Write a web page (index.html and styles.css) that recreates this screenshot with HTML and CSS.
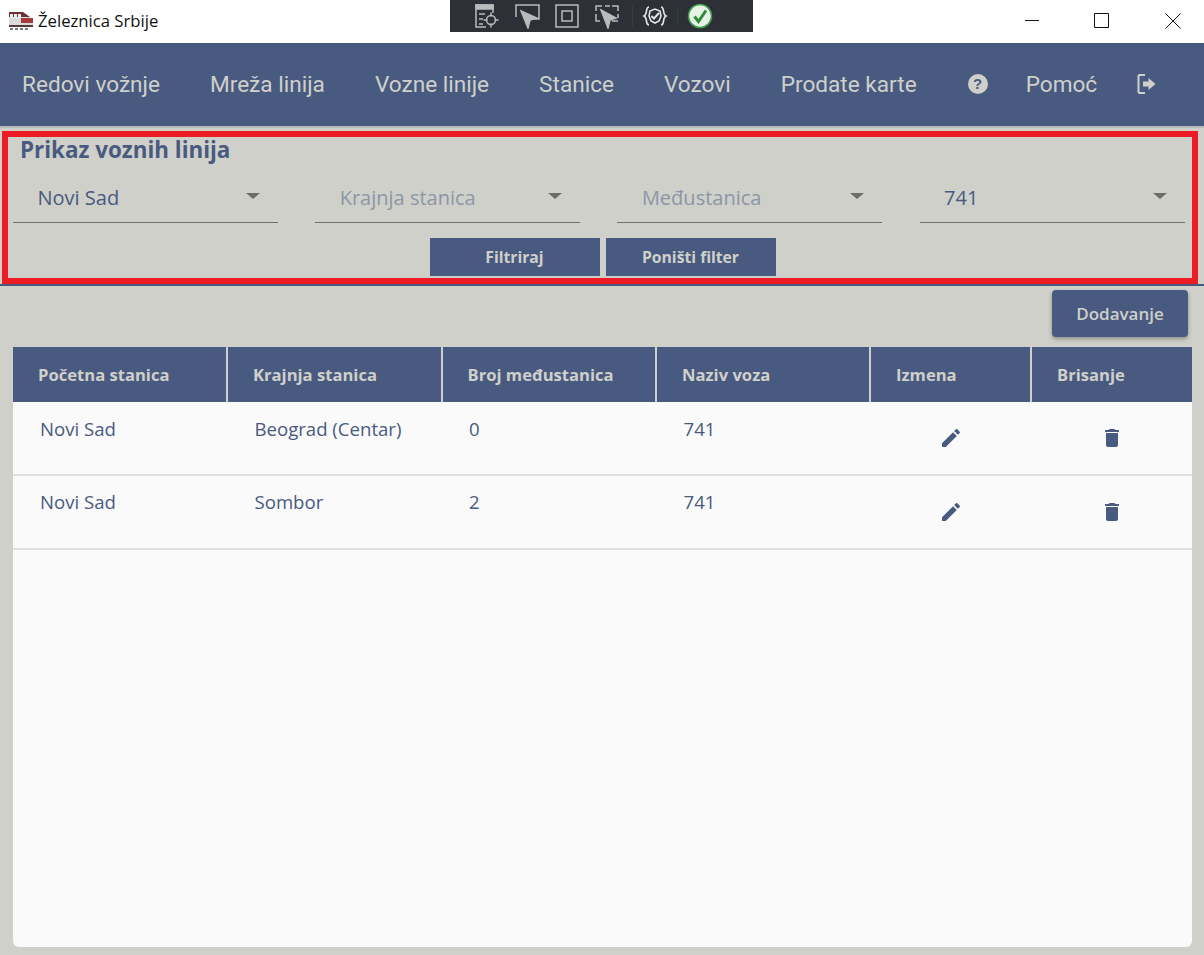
FILE: index.html
```html
<!DOCTYPE html>
<html lang="en">
  <head>
    <meta charset="UTF-8" />
    <title>Železnica Srbije</title>
    <link rel="stylesheet" href="styles.css">
  </head>
  <body>
    <div class="titlebar">
      <svg class="app-icon" width="26" height="20" viewBox="0 0 26 20">
        <path d="M1 2h14l7 4 3 4v5H1z" fill="#d9dcdc" />
        <path d="M1 1h14l7 5H1z" fill="#6b3134" />
        <path d="M2 3h3v4H2zM6 3h3v4H6zM10 3h3v4h-3z" fill="#e8eef0" />
        <path d="M13 7h12v5H13z" fill="#a8383c" />
        <path d="M1 14h24v2H1z" fill="#59393b" />
        <path d="M2 17h3v2H2zM7 17h3v2H7zM12 17h3v2h-3zM17 17h3v2h-3z" fill="#777" />
      </svg>
      <span class="app-title">Železnica Srbije</span>
      <div class="win-controls">
        <svg width="16" height="16" viewBox="0 0 16 16"><path d="M2 7.500h14" stroke="#111" fill="none" /></svg>
        <svg width="16" height="16" viewBox="0 0 16 16"><path d="M.5.500h14v14H.500z" stroke="#111" fill="none" /></svg>
        <svg width="16" height="16" viewBox="0 0 16 16"><path d="M.5.500l15 15M15.500.500l-15 15" stroke="#111" fill="none" /></svg>
      </div>
    </div>

    <div class="debug-bar">
      <svg width="26" height="26" viewBox="0 0 26 26" fill="none" stroke="#b9bbbd" stroke-width="1.500">
        <path d="M12 24H2V2h17v8" />
        <path d="M2 2h17v4H2z" fill="#b9bbbd" />
        <path d="M5 11h6M5 16h4M5 21h4" />
        <circle cx="17" cy="17" r="4.500" />
        <path d="M17 9.500v4M17 20.500v4M9.500 17h4M20.500 17h4" />
      </svg>
      <svg width="26" height="26" viewBox="0 0 26 26" fill="none" stroke="#b9bbbd" stroke-width="1.500">
        <path d="M2 14V2h23v14h-6" />
        <path d="M7 8l16 7-7 2-2 8z" fill="#b9bbbd" />
      </svg>
      <svg width="26" height="26" viewBox="0 0 26 26" fill="none" stroke="#b9bbbd" stroke-width="1.500">
        <path d="M2 2h22v22H2z" />
        <path d="M8 8h10v10H8z" />
      </svg>
      <svg width="26" height="26" viewBox="0 0 26 26" fill="none" stroke="#b9bbbd" stroke-width="1.500">
        <path d="M2 8V3h6M11 3h5M18 3h6v5M24 11v4M24 18h-6M2 11v7h4" />
        <path d="M7 7l15 8-6 2-2 8z" fill="#b9bbbd" />
      </svg>
      <span class="debug-sep"></span>
      <svg width="26" height="26" viewBox="0 0 26 26" fill="none" stroke="#e4e4e4" stroke-width="1.600">
        <path d="M7 4C3 4 6 11 2 13c4 2 1 9 5 9M19 4c4 0 1 7 5 9-4 2-1 9-5 9" />
        <path d="M8 8l5-2 5 2 1 5-2 5-4 2-4-2-2-5z" />
        <path d="M9.500 13l2.500 2.500L17 10" stroke-width="2" />
      </svg>
      <span class="debug-sep"></span>
      <svg width="26" height="26" viewBox="0 0 26 26">
        <circle cx="13" cy="13" r="11.500" fill="#e6f3e4" stroke="#3f9a4a" stroke-width="1.600" />
        <path d="M7.500 13.500l4 5L19 7.500" fill="none" stroke="#2f8a3c" stroke-width="3" />
      </svg>
    </div>

    <nav class="navbar">
      <a class="nav-link">Redovi vožnje</a>
      <a class="nav-link">Mreža linija</a>
      <a class="nav-link">Vozne linije</a>
      <a class="nav-link">Stanice</a>
      <a class="nav-link">Vozovi</a>
      <a class="nav-link">Prodate karte</a>
      <span class="help-icon">?</span>
      <a class="nav-link help-link">Pomoć</a>
      <svg class="logout-icon" width="20" height="22" viewBox="0 0 20 22" fill="none">
        <path d="M8 2H2.500a1 1 0 0 0-1 1v16a1 1 0 0 0 1 1H8" stroke="#cfd0ca" stroke-width="2" />
        <path d="M6 8.500h5.500V5l7 6-7 6v-3.500H6z" fill="#cfd0ca" />
      </svg>
    </nav>

    <section class="filter-wrap">
      <div class="filter-box">
        <h2 class="filter-title">Prikaz voznih linija</h2>
        <div class="filter-fields">
          <div class="select-field">Novi Sad<span class="caret"></span></div>
          <div class="select-field placeholder">Krajnja stanica<span class="caret"></span></div>
          <div class="select-field placeholder">Međustanica<span class="caret"></span></div>
          <div class="select-field">741<span class="caret"></span></div>
        </div>
        <div class="filter-actions">
          <button class="btn-filter">Filtriraj</button>
          <button class="btn-filter">Poništi filter</button>
        </div>
      </div>
    </section>

    <div class="add-row">
      <button class="btn-add">Dodavanje</button>
    </div>

    <div class="table-card">
      <table class="lines-table">
        <colgroup>
          <col class="col-a" /><col class="col-b" /><col class="col-c" /><col class="col-d" /><col class="col-e" /><col class="col-f" />
        </colgroup>
        <thead>
          <tr>
            <th>Početna stanica</th>
            <th>Krajnja stanica</th>
            <th>Broj međustanica</th>
            <th>Naziv voza</th>
            <th>Izmena</th>
            <th>Brisanje</th>
          </tr>
        </thead>
        <tbody>
          <tr>
            <td>Novi Sad</td>
            <td>Beograd (Centar)</td>
            <td>0</td>
            <td>741</td>
            <td class="icon-cell">
              <svg width="24" height="24" viewBox="0 0 24 24"><path d="M3 17.250V21h3.750L17.810 9.940l-3.750-3.750L3 17.250zM20.710 7.040a1 1 0 0 0 0-1.410l-2.340-2.340a1 1 0 0 0-1.410 0l-1.830 1.830 3.750 3.750 1.830-1.830z" /></svg>
            </td>
            <td class="icon-cell">
              <svg width="24" height="24" viewBox="0 0 24 24"><path d="M6 19c0 1.100.9 2 2 2h8c1.100 0 2-.9 2-2V7H6v12zM19 4h-3.500l-1-1h-5l-1 1H5v2h14V4z" /></svg>
            </td>
          </tr>
          <tr>
            <td>Novi Sad</td>
            <td>Sombor</td>
            <td>2</td>
            <td>741</td>
            <td class="icon-cell">
              <svg width="24" height="24" viewBox="0 0 24 24"><path d="M3 17.250V21h3.750L17.810 9.940l-3.750-3.750L3 17.250zM20.710 7.040a1 1 0 0 0 0-1.410l-2.340-2.340a1 1 0 0 0-1.410 0l-1.830 1.830 3.750 3.750 1.830-1.830z" /></svg>
            </td>
            <td class="icon-cell">
              <svg width="24" height="24" viewBox="0 0 24 24"><path d="M6 19c0 1.100.9 2 2 2h8c1.100 0 2-.9 2-2V7H6v12zM19 4h-3.500l-1-1h-5l-1 1H5v2h14V4z" /></svg>
            </td>
          </tr>
        </tbody>
      </table>
    </div>
  </body>
</html>
```

FILE: styles.css
```css
* {
  box-sizing: border-box;
}

body {
  margin: 0;
  height: 955px;
  overflow: hidden;
  background-color: #cfd0ca;
  color: #495a80;
  font-family: "Open Sans", "Noto Sans", sans-serif;
}

.titlebar {
  display: flex;
  align-items: center;
  height: 43px;
  background-color: #fff;
  padding-left: 8px;
  padding-bottom: 2px;
}

.app-title {
  margin-left: 4px;
  font-size: 16.700px;
  color: #111;
}

.win-controls {
  display: flex;
  gap: 55px;
  margin-left: auto;
  padding-right: 23px;
}

.win-controls svg {
  display: block;
  overflow: visible;
}

.debug-bar {
  position: absolute;
  top: 0;
  left: 450px;
  width: 303px;
  height: 32px;
  display: flex;
  align-items: center;
  gap: 14px;
  padding-left: 24px;
  background-color: #2d3037;
}

.debug-sep {
  width: 1px;
  height: 22px;
  margin: 0 -5px 0 -2px;
  background-color: #373a41;
}

.debug-sep + svg + .debug-sep {
  margin-left: -5px;
}

.navbar {
  display: flex;
  align-items: center;
  height: 85px;
  padding-left: 22px;
  padding-bottom: 1px;
  background-color: #495a80;
  border-bottom: 2px solid #b9bdbf;
}

.nav-link {
  margin-right: 50px;
  font-family: Roboto, sans-serif;
  font-size: 22.600px;
  color: #cfd0ca;
}

.help-icon {
  width: 20px;
  height: 20px;
  margin-left: 1px;
  border-radius: 50%;
  background-color: #cfd0ca;
  color: #495a80;
  font-family: "Liberation Sans", sans-serif;
  font-size: 15px;
  font-weight: bold;
  line-height: 20px;
  text-align: center;
}

.help-link {
  margin-left: 38px;
  margin-right: 40px;
}

.filter-wrap {
  height: 158px;
  padding: 3px 6px 0 2px;
  border-bottom: 2px solid #495a80;
}

.filter-box {
  height: 153px;
  border: 6px solid #ed1c24;
  padding: 0 7px 0 5px;
}

.filter-title {
  margin: 0;
  padding-left: 7px;
  font-size: 22.400px;
  font-weight: 700;
  line-height: 26px;
}

.filter-fields {
  display: grid;
  grid-template-columns: repeat(4, 265px);
  column-gap: 37.200px;
  margin-top: 13px;
}

.select-field {
  position: relative;
  height: 47px;
  padding: 8px 0 0 24.500px;
  border-bottom: 1px solid #6f706c;
  font-size: 20px;
  line-height: 27px;
}

.select-field.placeholder {
  color: #8d96a6;
}

.caret {
  position: absolute;
  top: 17px;
  right: 18px;
  border-style: solid;
  border-width: 6px 7px 0 7px;
  border-color: #6d6d68 transparent transparent transparent;
}

.filter-actions {
  display: flex;
  justify-content: center;
  gap: 6px;
  margin-top: 15px;
  padding-left: 7px;
}

.btn-filter {
  width: 170px;
  height: 38px;
  border: none;
  background-color: #495a80;
  color: #cfd0ca;
  font-family: inherit;
  font-size: 15.700px;
  font-weight: 700;
}

.add-row {
  display: flex;
  justify-content: flex-end;
  padding: 4px 16px 0 0;
}

.btn-add {
  width: 136px;
  height: 47px;
  border: none;
  border-radius: 4px;
  background-color: #495a80;
  box-shadow: 0 2px 4px rgba(0, 0, 0, 0.3);
  color: #cfd0ca;
  font-family: inherit;
  font-size: 17px;
  font-weight: 600;
}

.table-card {
  height: 600px;
  margin: 10px 12px 0 13px;
  background-color: #fafafa;
  border-radius: 0 0 6px 6px;
}

.lines-table {
  width: 100%;
  table-layout: fixed;
  border-collapse: collapse;
}

.col-a { width: 214px; }
.col-b { width: 214.500px; }
.col-c { width: 214.500px; }
.col-d { width: 214px; }
.col-e { width: 161px; }

.lines-table th {
  height: 55px;
  padding: 0 0 0 25px;
  background-color: #495a80;
  border-right: 2px solid #cfd0ca;
  color: #cfd0ca;
  font-size: 16.600px;
  font-weight: 700;
  text-align: left;
}

.lines-table th:last-child {
  border-right: none;
}

.lines-table td {
  height: 73px;
  padding: 0 0 19px 27px;
  border-bottom: 2px solid #dfdfdf;
  font-size: 18.600px;
  color: #495a80;
}

.lines-table td + td {
  padding-left: 27.500px;
}

.lines-table tr + tr td {
  height: 74px;
  padding-bottom: 21px;
}

.lines-table .icon-cell,
.lines-table tr + tr .icon-cell {
  padding: 0;
  text-align: center;
}

.icon-cell svg {
  display: block;
  margin: 0 auto;
  fill: #495a80;
}
```
